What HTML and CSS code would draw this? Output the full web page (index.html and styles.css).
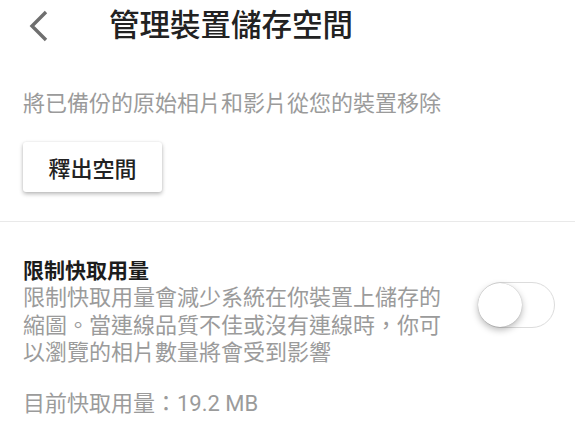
FILE: index.html
```html
<!DOCTYPE html>
<html lang="zh-Hant">
<head>
<meta charset="utf-8">
<title>管理裝置儲存空間</title>
<link rel="stylesheet" href="styles.css">
</head>
<body>
<header class="topbar">
  <button class="back" aria-label="返回">
    <svg width="22" height="32" viewBox="0 0 22 32"><polyline points="18,2 4,16 18,30" fill="none" stroke="#6f6f6f" stroke-width="3.4" stroke-linecap="butt" stroke-linejoin="miter"/></svg>
  </button>
  <h1 class="title">管理裝置儲存空間</h1>
</header>
<section class="free">
  <p class="desc">將已備份的原始相片和影片從您的裝置移除</p>
  <button class="btn">釋出空間</button>
</section>
<hr class="divider">
<section class="cache">
  <div class="cache-row">
    <div class="cache-text">
      <h2 class="cache-title">限制快取用量</h2>
      <p class="cache-desc">限制快取用量會減少系統在你裝置上儲存的縮圖。當連線品質不佳或沒有連線時，你可以瀏覽的相片數量將會受到影響</p>
    </div>
    <div class="switch"><span class="knob"></span></div>
  </div>
  <p class="usage">目前快取用量：19.2 MB</p>
</section>
</body>
</html>
```
FILE: styles.css
```css
html, body {
  margin: 0;
  padding: 0;
  background: #ffffff;
}
body {
  font-family: Roboto, "Noto Sans CJK TC", "Noto Sans", sans-serif;
  color: #222;
  width: 575px;
  overflow: hidden;
}
.topbar {
  display: flex;
  align-items: center;
  height: 48px;
  padding-top: 2px;
  padding-left: 28px;
}
.back {
  border: 0;
  background: none;
  padding: 0;
  width: 22px;
  height: 32px;
  display: flex;
}
.title {
  margin: 0 0 0 59px;
  font-size: 30.5px;
  font-weight: 500;
  line-height: 48px;
  color: #222;
}
.free {
  padding: 39px 0 0 23px;
}
.desc {
  margin: 0;
  font-size: 22px;
  line-height: 30px;
  color: #9b9b9b;
}
.btn {
  display: block;
  margin-top: 23px;
  width: 139px;
  height: 50px;
  border: 0;
  border-radius: 3px;
  background: #fff;
  box-shadow: 0 2px 4px rgba(0,0,0,0.28), 0 0 2px rgba(0,0,0,0.08);
  font-family: inherit;
  font-size: 22px;
  font-weight: 500;
  color: #222;
  padding: 0;
}
.divider {
  border: 0;
  height: 1px;
  background: #e9e9e9;
  margin: 29px 0 0 0;
}
.cache {
  padding: 37px 20px 0 23px;
}
.cache-row {
  display: flex;
  justify-content: space-between;
}
.cache-text {
  width: 420px;
}
.cache-title {
  margin: 0;
  font-size: 21px;
  font-weight: 700;
  line-height: 25px;
  color: #1c1c1c;
}
.cache-desc {
  margin: 0;
  font-size: 22px;
  line-height: 27.5px;
  color: #9b9b9b;
}
.switch {
  margin-top: 23px;
  width: 75px;
  height: 44px;
  border: 1px solid #dcdcdc;
  border-radius: 23px;
  background: #fff;
  position: relative;
  flex: none;
}
.knob {
  position: absolute;
  left: -1px;
  top: 0;
  width: 44px;
  height: 44px;
  border-radius: 50%;
  background: #fff;
  box-shadow: 0 3px 7px rgba(0,0,0,0.28), 0 0 1px rgba(0,0,0,0.3);
}
.usage {
  margin: 22px 0 0 0;
  font-size: 22px;
  line-height: 30px;
  color: #9b9b9b;
}
```
